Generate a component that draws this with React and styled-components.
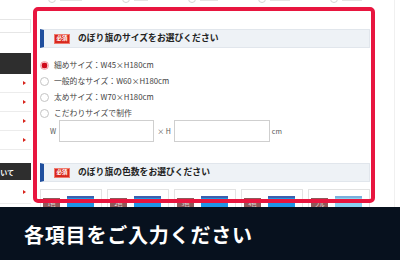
import React from "react";
import styled, { createGlobalStyle } from "styled-components";

const Global = createGlobalStyle`
  html, body { margin: 0; padding: 0; background: #fff; }
  * { box-sizing: border-box; }
  body { font-family: "Noto Sans CJK JP", "Noto Sans", sans-serif; }
`;

const Screen = styled.div`
  width: 400px;
  height: 260px;
  overflow: hidden;
  display: flex;
  flex-direction: column;
  background: #fff;
`;

const Viewport = styled.div`
  position: relative;
  height: 207px;
  flex: none;
  overflow: hidden;
  display: flex;
  align-items: flex-start;
  gap: 9px;
`;

const Sidebar = styled.div`
  width: 31px;
  flex: none;
  display: flex;
  flex-direction: column;
  overflow: hidden;
  & > * { flex-shrink: 0; }
`;

const SideBox = styled.div`
  height: ${(p) => p.h}px;
  border-bottom: 1px solid #e6e6e6;
  border-right: ${(p) => (p.edge ? "1px solid #e6e6e6" : "none")};
`;

const SideSpacer = styled.div`
  height: ${(p) => p.h}px;
`;

const SideDark = styled.div`
  height: ${(p) => p.h}px;
  background: #2e2e2e;
  display: flex;
  align-items: center;
  justify-content: flex-end;
  padding-right: 17px;
  color: #fff;
  font-size: 7px;
  font-weight: 700;
  white-space: nowrap;
`;

const SideRow = styled.div`
  height: ${(p) => p.h || 19}px;
  border-bottom: 1px solid #ececec;
  display: flex;
  align-items: center;
  justify-content: flex-end;
  padding-right: 5px;
`;

const Arrow = styled.span`
  width: 0;
  height: 0;
  border-top: 2px solid transparent;
  border-bottom: 2px solid transparent;
  border-left: 3px solid #d8231b;
`;

const Main = styled.div`
  width: 330px;
  flex: none;
  display: flex;
  flex-direction: column;
  & > * { flex-shrink: 0; }
`;

const TopStrip = styled.div`
  height: 4px;
  overflow: hidden;
  display: flex;
  align-items: flex-end;
  gap: 40px;
  padding-left: 8px;
`;

const FaintItem = styled.div`
  display: flex;
  align-items: center;
  gap: 4px;
  height: 10px;
  flex: none;
`;

const FaintCircle = styled.span`
  width: 8px;
  height: 8px;
  border-radius: 50%;
  border: 1px solid #d6d6d6;
`;

const FaintText = styled.span`
  width: ${(p) => p.w}px;
  height: 3px;
  background: #e4e4e4;
`;

const Header = styled.div`
  margin-top: ${(p) => p.mt}px;
  height: 19px;
  display: flex;
  align-items: center;
  background: #eef2f6;
  border: 1px solid #e1e6ec;
  border-left: 4px solid #1f4f9e;
  padding-left: 10px;
`;

const Badge = styled.span`
  width: 16px;
  height: 10px;
  background: #d8281d;
  border: 1px solid #ee7a6e;
  color: #fff;
  font-size: 5.5px;
  font-weight: 700;
  display: flex;
  align-items: center;
  justify-content: center;
  margin-right: 8px;
  line-height: 1;
`;

const HeaderTitle = styled.span`
  font-size: 8.8px;
  font-weight: 700;
  color: #222;
  white-space: nowrap;
  line-height: 1;
`;

const RadioList = styled.div`
  margin-top: 9px;
  display: flex;
  flex-direction: column;
`;

const RadioRow = styled.div`
  height: 16px;
  display: flex;
  align-items: center;
  gap: 5px;
`;

const Radio = styled.span`
  width: 9px;
  height: 9px;
  border-radius: 50%;
  flex: none;
  border: 1px solid ${(p) => (p.checked ? "#f2a0a8" : "#c4c4c4")};
  background: ${(p) =>
    p.checked ? "radial-gradient(circle, #cf0a1c 0 55%, #f7c6cb 62%)" : "#fff"};
`;

const RadioLabel = styled.span`
  font-size: 7.8px;
  color: #444;
  white-space: nowrap;
  line-height: 1;
`;

const SizeRow = styled.div`
  margin-top: -1px;
  height: 22px;
  display: flex;
  align-items: center;
  padding-left: 10px;
`;

const SizeText = styled.span`
  font-size: 7px;
  color: #555;
  white-space: nowrap;
  margin: 0 ${(p) => p.mr || 0}px 0 ${(p) => p.ml || 0}px;
`;

const SizeInput = styled.div`
  width: ${(p) => p.w}px;
  height: 22px;
  border: 1px solid #cfcfcf;
  background: #fff;
`;

const Cards = styled.div`
  margin-top: 7px;
  display: grid;
  grid-template-columns: repeat(5, 1fr);
  gap: 5px;
`;

const Card = styled.div`
  height: 40px;
  border: 1px solid #e3e3e3;
  border-bottom: none;
  padding: 6px 0 0 2px;
  display: flex;
  align-items: flex-start;
  gap: 7px;
`;

const ColorLabel = styled.span`
  width: 17px;
  height: 11px;
  background: #8d5a5a;
  color: #eee;
  font-size: 5px;
  display: flex;
  align-items: center;
  justify-content: center;
  margin-top: 2px;
`;

const ColorBlock = styled.span`
  width: 27px;
  height: 12px;
  background: ${(p) => (p.light ? "#8ad4f2" : "#1f97e6")};
  border-top: 2px solid ${(p) => (p.light ? "#7ab0dd" : "#3c5fae")};
`;

const Highlight = styled.div`
  position: absolute;
  left: 33px;
  top: 7px;
  width: 342px;
  height: 196px;
  border: 4px solid #e8163f;
  border-radius: 5px;
  pointer-events: none;
`;

const RightEdge = styled.div`
  flex: 1;
  align-self: stretch;
  display: flex;
  justify-content: flex-end;
  padding-right: 5px;
`;

const EdgeLine = styled.div`
  width: 1px;
  background: #f0f0f0;
`;

const Banner = styled.div`
  height: 53px;
  flex: none;
  background: #07111e;
  display: flex;
  align-items: center;
  padding: 2px 0 0 24px;
`;

const BannerText = styled.span`
  color: #fff;
  font-size: 20px;
  font-weight: 700;
  letter-spacing: 0.8px;
  white-space: nowrap;
`;

const sizes = [
  { label: "細めサイズ：W45×H180cm", checked: true },
  { label: "一般的なサイズ：W60×H180cm" },
  { label: "太めサイズ：W70×H180cm" },
  { label: "こだわりサイズで制作" },
];

const colors = ["1色", "2色", "3色", "4色", "フル"];

export default function App() {
  return (
    <>
      <Global />
      <Screen>
        <Viewport>
          <Sidebar>
            <SideBox h={20} />
            <SideBox h={13} edge />
            <SideSpacer h={20} />
            <SideDark h={21} />
            <SideRow><Arrow /></SideRow>
            <SideRow><Arrow /></SideRow>
            <SideRow><Arrow /></SideRow>
            <SideRow><Arrow /></SideRow>
            <SideSpacer h={13} />
            <SideDark h={17}>いて</SideDark>
            <SideRow h={24}><Arrow /></SideRow>
          </Sidebar>
          <Main>
            <TopStrip>
              <FaintItem><FaintCircle /><FaintText w={22} /></FaintItem>
              <FaintItem><FaintCircle /><FaintText w={14} /></FaintItem>
              <FaintItem><FaintCircle /><FaintText w={18} /></FaintItem>
              <FaintItem><FaintCircle /><FaintText w={20} /></FaintItem>
              <FaintItem><FaintCircle /><FaintText w={20} /></FaintItem>
            </TopStrip>
            <Header mt={25}>
              <Badge>必須</Badge>
              <HeaderTitle>のぼり旗のサイズをお選びください</HeaderTitle>
            </Header>
            <RadioList>
              {sizes.map((s) => (
                <RadioRow key={s.label}>
                  <Radio checked={s.checked} />
                  <RadioLabel>{s.label}</RadioLabel>
                </RadioRow>
              ))}
            </RadioList>
            <SizeRow>
              <SizeText mr={3}>W</SizeText>
              <SizeInput w={95} />
              <SizeText ml={3} mr={3}>× H</SizeText>
              <SizeInput w={96} />
              <SizeText ml={2}>cm</SizeText>
            </SizeRow>
            <Header mt={21}>
              <Badge>必須</Badge>
              <HeaderTitle>のぼり旗の色数をお選びください</HeaderTitle>
            </Header>
            <Cards>
              {colors.map((c, i) => (
                <Card key={c}>
                  <ColorLabel>{c}</ColorLabel>
                  <ColorBlock light={i === 4} />
                </Card>
              ))}
            </Cards>
          </Main>
          <RightEdge>
            <EdgeLine />
          </RightEdge>
          <Highlight />
        </Viewport>
        <Banner>
          <BannerText>各項目をご入力ください</BannerText>
        </Banner>
      </Screen>
    </>
  );
}
